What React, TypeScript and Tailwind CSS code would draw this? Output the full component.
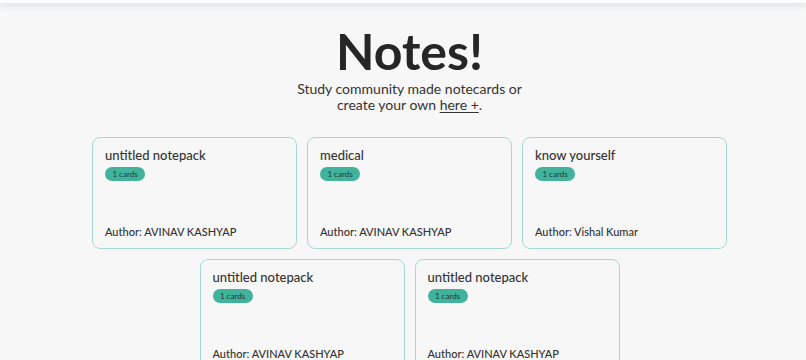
const packs = [
  { title: "untitled notepack", cards: 1, author: "AVINAV KASHYAP" },
  { title: "medical", cards: 1, author: "AVINAV KASHYAP" },
  { title: "know yourself", cards: 1, author: "Vishal Kumar" },
  { title: "untitled notepack", cards: 1, author: "AVINAV KASHYAP" },
  { title: "untitled notepack", cards: 1, author: "AVINAV KASHYAP" },
];

const NotepackCard = ({ title, cards, author }: { title: string; cards: number; author: string }) => (
  <div className="flex h-[112px] w-[205px] flex-col rounded-lg border border-[#a6dbd2] px-3 pt-[7px] pb-[8px]">
    <span className="text-[13px] font-medium leading-5 text-[#333]">{title}</span>
    <span className="mt-[2px] flex h-[14px] w-[40px] items-center justify-center rounded-full bg-[#41b29c] text-[8px] text-[#1f3b36]">
      {cards} cards
    </span>
    <span className="mt-auto text-[11px] font-medium leading-4 text-[#333]">Author: {author}</span>
  </div>
);

export default function App() {
  return (
    <div
      className="min-h-screen bg-[#f7f7f7] text-[#222]"
      style={{ fontFamily: "Lato, 'Noto Sans', sans-serif" }}
    >
      <div className="h-[3px] bg-white shadow-[0_2px_6px_rgba(120,140,160,0.35)]" />
      <main className="flex flex-col items-center pl-[13px]">
        <h1 className="mt-[18px] text-[50px] font-bold leading-[60px] text-[#262626]">Notes!</h1>
        <p className="text-center text-[14px] leading-[16px] text-[#333]">
          Study community made notecards or
          <br />
          create your own <span className="underline underline-offset-2">here +</span>.
        </p>
        <div className="mt-[24px] flex w-[640px] flex-wrap justify-center gap-[10px]">
          {packs.map((p, i) => (
            <NotepackCard key={i} {...p} />
          ))}
        </div>
      </main>
    </div>
  );
}
